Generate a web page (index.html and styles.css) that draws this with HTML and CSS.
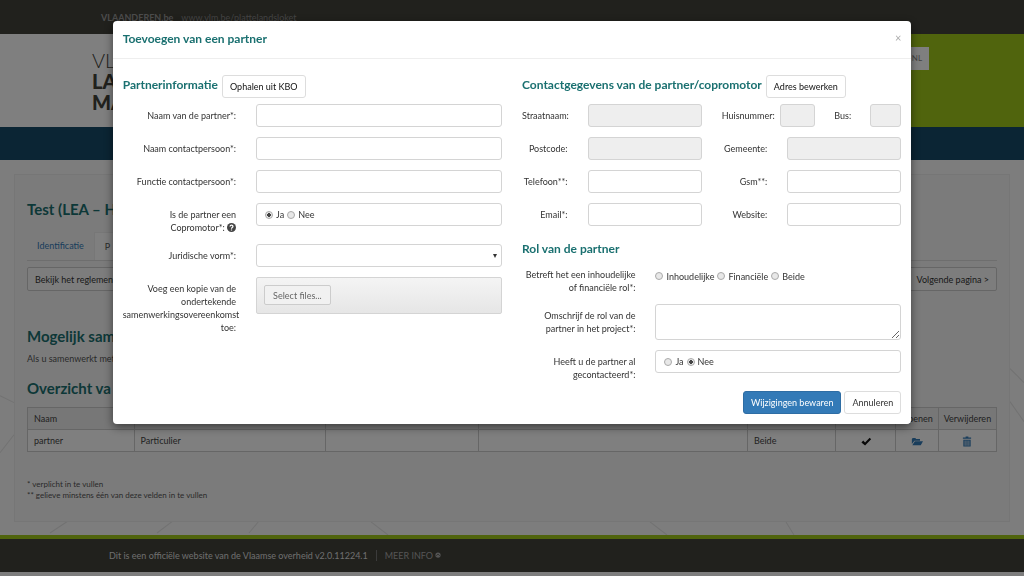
FILE: index.html
```html
<!DOCTYPE html>
<html lang="nl">
<head>
<meta charset="utf-8">
<meta name="viewport" content="width=device-width, initial-scale=1">
<title>Toevoegen van een partner</title>
<link rel="stylesheet" href="styles.css">
</head>
<body>
<div class="page">
  <div class="topbar"><b>VLAANDEREN.be</b><a href="#">www.vlm.be/plattelandsloket</a></div>
  <header class="header">
    <div class="logo"><span>VL</span><b>LA</b><b>MA</b></div>
    <div class="banner"><span class="lang">NL</span></div>
  </header>
  <nav class="navbar"></nav>
  <main class="main">
    <svg class="pattern" viewBox="0 0 1024 374" preserveAspectRatio="none" aria-hidden="true">
      <path d="M0 235l14 7M0 292l14-18M50 372l18-12M157 372l16-12M249 372l10-12M371 361l17 13M650 361l17 13M786 361l8 13M1010 208l14 14M1010 241l14 20"/>
    </svg>
    <section class="panel">
      <h1>Test (LEA – H</h1>
      <div class="tabs"><a href="#">Identificatie</a><a href="#" class="current">P</a></div>
      <div class="toolbar"><button type="button">Bekijk het reglement</button><button type="button">Volgende pagina &gt;</button></div>
      <h2>Mogelijk sam</h2>
      <p>Als u samenwerkt met</p>
      <h2>Overzicht va</h2>
      <table class="overview">
        <colgroup><col class="name"><col class="kind"><col class="third"><col class="fourth"><col class="role"><col class="check"><col class="open"><col class="remove"></colgroup>
        <thead><tr><th>Naam</th><th></th><th></th><th></th><th></th><th></th><th>Openen</th><th>Verwijderen</th></tr></thead>
        <tbody><tr>
          <td>partner</td><td>Particulier</td><td></td><td></td><td>Beide</td>
          <td class="mark"><svg class="icon black" viewBox="0 0 12 12" aria-label="Ja"><path d="M1 7l2-2 2 2 5-5 1.600 1.600L5 10.400z"/></svg></td>
          <td class="mark"><a href="#" aria-label="Openen"><svg class="icon" viewBox="0 0 14 12"><path d="M1 9V3l1-1h3l1 1h4.500v2H4zM1.500 10.500L4.500 5.600H14l-2.600 4.900z"/></svg></a></td>
          <td class="mark"><a href="#" aria-label="Verwijderen"><svg class="icon" viewBox="0 0 12 12"><path fill-rule="evenodd" d="M1.500 1.500h3V.5h3v1h3V3h-9zM2 4h8v7.500H2zM3.500 5v5.500h.8V5zM5.600 5v5.500h.8V5zM7.700 5v5.500h.8V5z"/></svg></a></td>
        </tr></tbody>
      </table>
      <div class="notes"><span>* verplicht in te vullen</span><span>** gelieve minstens één van deze velden in te vullen</span></div>
    </section>
  </main>
  <footer class="footer">
    <span>Dit is een officiële website van de Vlaamse overheid v2.0.11224.1</span>
    <a href="#">MEER INFO <svg class="up" viewBox="0 0 8 8" aria-hidden="true"><circle cx="4" cy="4" r="3.500"/><path d="M1.800 5L4 2.800 6.200 5"/></svg></a>
  </footer>
</div>

<div class="backdrop">
  <form class="modal" role="dialog" aria-labelledby="dialog-title">
    <div class="modal-header"><h3 id="dialog-title">Toevoegen van een partner</h3><button type="button" class="close" aria-label="Sluiten">×</button></div>
    <div class="modal-body">
      <section class="column">
        <div class="section-head"><h3>Partnerinformatie</h3><button type="button" class="btn strong">Ophalen uit KBO</button></div>
        <div class="fields">
          <label for="naam">Naam van de partner*:</label><input class="control" id="naam" type="text">
          <label for="contact">Naam contactpersoon*:</label><input class="control" id="contact" type="text">
          <label for="functie">Functie contactpersoon*:</label><input class="control" id="functie" type="text">
          <span class="label" id="coprom">Is de partner een Copromotor*: <svg class="help" viewBox="0 0 10 10" aria-hidden="true"><circle cx="5" cy="5" r="5"/><path d="M3.400 4c0-2.200 3.300-2 3.200-.1C6.600 5 5 5 5 6.300M5 7.200v1.200"/></svg></span>
          <div class="control radios" role="radiogroup" aria-labelledby="coprom"><label><input type="radio" name="coprom" checked>Ja</label><label><input type="radio" name="coprom">Nee</label></div>
          <label for="vorm">Juridische vorm*:</label>
          <div class="select"><select class="control" id="vorm"><option></option></select><svg viewBox="0 0 6 6" aria-hidden="true"><path d="M1 1h4L3 5z"/></svg></div>
          <span class="label">Voeg een kopie van de ondertekende samenwerkingsovereenkomst toe:</span>
          <div class="upload"><button type="button">Select files...</button></div>
        </div>
      </section>
      <section class="column">
        <div class="section-head"><h3>Contactgegevens van de partner/copromotor</h3><button type="button" class="btn strong">Adres bewerken</button></div>
        <div class="fields quad">
          <label for="straat">Straatnaam:</label><input class="control" id="straat" type="text" disabled>
          <div class="house"><label for="nummer">Huisnummer:</label><input class="control number" id="nummer" type="text" disabled><label for="bus">Bus:</label><input class="control bus" id="bus" type="text" disabled></div>
          <label for="postcode">Postcode:</label><input class="control" id="postcode" type="text" disabled>
          <label for="gemeente">Gemeente:</label><input class="control" id="gemeente" type="text" disabled>
          <label for="telefoon">Telefoon**:</label><input class="control" id="telefoon" type="text">
          <label for="gsm">Gsm**:</label><input class="control" id="gsm" type="text">
          <label for="email">Email*:</label><input class="control" id="email" type="text">
          <label for="website">Website:</label><input class="control" id="website" type="text">
        </div>
        <h3 class="role-title">Rol van de partner</h3>
        <div class="fields">
          <span class="label" id="rol">Betreft het een inhoudelijke of financiële rol*:</span>
          <div class="radios open-radios" role="radiogroup" aria-labelledby="rol"><label><input type="radio" name="rol">Inhoudelijke</label><label><input type="radio" name="rol">Financiële</label><label><input type="radio" name="rol">Beide</label></div>
          <label for="omschrijving">Omschrijf de rol van de partner in het project*:</label><textarea class="control area" id="omschrijving"></textarea>
          <span class="label" id="gecontacteerd">Heeft u de partner al gecontacteerd*:</span>
          <div class="control radios" role="radiogroup" aria-labelledby="gecontacteerd"><label><input type="radio" name="gecontacteerd">Ja</label><label><input type="radio" name="gecontacteerd" checked>Nee</label></div>
        </div>
        <div class="actions"><button type="submit" class="btn primary">Wijzigingen bewaren</button><button type="button" class="btn">Annuleren</button></div>
      </section>
    </div>
  </form>
</div>
</body>
</html>
```

FILE: styles.css
```css
* { box-sizing: border-box; }
body { margin: 0; background: #fafafa; color: #333; font: 9px/13px Lato, "Liberation Sans", sans-serif; }
h1, h2, h3, p { margin: 0; }
h1, h2, h3 { color: #1a7070; font-weight: 700; }
a { color: #337ab7; text-decoration: none; }
button, input, select, textarea { font: inherit; color: inherit; }

.topbar { display: flex; gap: 8px; height: 34px; padding: 0 101px; align-items: center; background: #42423a; color: #999; }
.topbar a { color: #888; }
.header { display: flex; justify-content: space-between; height: 93px; background: #fff; }
.logo { display: flex; flex-direction: column; padding: 16px 0 0 92px; font-size: 20px; line-height: 21px; color: #42423a; }
.logo span { font-weight: 300; }
.logo b { font-weight: 900; }
.banner { display: flex; justify-content: flex-end; width: 40%; padding: 13px 95px 0 0; background: #a0c81a; }
.lang { width: 40px; height: 23px; padding: 5px 7px; background: #fff; color: #888; font-size: 8px; text-align: right; }
.navbar { height: 33px; background: #164a68; }
.main { position: relative; padding: 14px 14px 13px; }
.pattern { position: absolute; inset: 0; width: 100%; height: 100%; fill: none; stroke: #e4e4e4; stroke-width: 1; }
.panel { position: relative; padding: 23px 12px 20px; border: 1px solid #ececec; background: #f7f7f7; }
h1, h2 { font-size: 15px; line-height: 22px; }
.tabs { display: flex; margin-top: 12px; border-bottom: 1px solid #ddd; }
.tabs a { padding: 7px 10px; }
.tabs .current { padding-right: 40px; background: #fff; border: 1px solid #eee; border-bottom: 0; color: #555; }
.toolbar { display: flex; justify-content: space-between; margin: 6px 0 34px; }
.toolbar button { height: 24px; padding: 0 7px; border: 1px solid #ccc; border-radius: 2px; background: #fbfbfb; }
.panel p { margin: 5px 0 12px; color: #555; }
.overview { width: 100%; margin-top: 8px; border-collapse: collapse; table-layout: fixed; background: #fff; color: #444; }
.overview th, .overview td { height: 22px; padding: 0 6px; border: 1px solid #ccc; text-align: left; font-weight: inherit; }
.overview th { background: #eee; padding-right: 2px; }
.overview th:nth-child(7), .overview th:nth-child(8) { padding: 0; text-align: center; }
.overview .mark { text-align: center; }
.name { width: 11%; } .kind { width: 19.8%; } .third { width: 15.7%; } .fourth { width: 27.8%; }
.role { width: 9.1%; } .check { width: 6.2%; } .open { width: 4.4%; } .remove { width: 6%; }
.icon { display: inline-block; width: 12px; height: 11px; vertical-align: middle; fill: currentColor; }
.black { fill: #111; }
.notes { display: flex; flex-direction: column; margin-top: 27px; color: #555; font-size: 8px; line-height: 11px; }
.footer { display: flex; height: 37px; align-items: center; gap: 8px; padding: 0 109px; border-top: 4px solid #a0c81a; background: #42423a; color: #ddd; }
.footer a { padding-left: 8px; border-left: 1px solid #777; color: #aaa; }
.footer a { line-height: 11px; }
.up { width: 6px; height: 6px; fill: #aaa; vertical-align: 1px; }
.up path { fill: none; stroke: #42423a; stroke-width: 1; }

.backdrop { position: fixed; inset: 0; overflow: auto; padding: 21px 0; background: rgba(0, 0, 0, .5); }
.modal { width: 78%; margin: 0 auto; border-radius: 4px; background: #fff; box-shadow: 0 3px 10px rgba(0, 0, 0, .5); }
.modal-header { display: flex; justify-content: space-between; height: 38px; padding: 10px; border-bottom: 1px solid #eee; }
h3 { font-size: 12px; line-height: 16px; }
.close { height: 13px; padding: 0; border: 0; background: none; color: #aaa; font-size: 11px; line-height: 13px; }
.modal-body { display: grid; grid-template-columns: repeat(2, minmax(0, 1fr)); gap: 20px; padding: 16px 10px 10px; }
.section-head { display: flex; align-items: flex-start; gap: 4px; margin-bottom: 6px; white-space: nowrap; }
.section-head h3 { padding-top: 2px; }
.btn { height: 23px; padding: 0 7px; border: 1px solid #ddd; border-radius: 3px; background: #fff; white-space: nowrap; }
.strong { color: #111; }
.primary { border-color: #2e6da4; background: #337ab7; color: #fff; }
.fields { display: grid; grid-template-columns: minmax(0, 6fr) minmax(0, 13fr); column-gap: 20px; row-gap: 10px; align-items: start; }
.fields > label, .label, .house label { padding-top: 5px; text-align: right; }
.quad { grid-template-columns: minmax(0, 2fr) minmax(0, 5fr) minmax(0, 2fr) minmax(0, 5fr); }
.control { display: block; width: 100%; height: 23px; padding: 0 8px; border: 1px solid #d4d4d4; border-radius: 3px; background: #fff; }
.control:disabled { background: #eee; }
.house { grid-column: span 2; display: flex; gap: 19px; }
.house .number { flex: 4; min-width: 0; margin-left: -14px; }
.house .bus { flex: 3; min-width: 0; }
.radios { display: flex; align-items: center; gap: 3px; min-height: 23px; }
.open-radios { min-height: 26px; }
.radios label { display: flex; align-items: center; gap: 3px; }
.radios input { appearance: none; width: 8px; height: 8px; margin: 0; border: 1px solid #aaa; border-radius: 50%; background: #e8e8e8; }
.radios input:checked { background: radial-gradient(circle, #444 0 2px, #e8e8e8 2px); }
.help { width: 9px; height: 9px; vertical-align: -1px; fill: #444; }
.help path { fill: none; stroke: #fff; stroke-width: 1.400; }
.select { display: grid; align-items: center; }
.select > * { grid-area: 1 / 1; }
.select select { appearance: none; }
.select svg { justify-self: end; width: 6px; height: 6px; margin-right: 4px; fill: #333; pointer-events: none; }
.upload { height: 37px; padding: 7px; border: 1px solid #d4d4d4; border-radius: 2px; background: linear-gradient(#f4f4f4, #e6e6e6); }
.upload button { height: 20px; padding: 0 8px; border: 1px solid #ccc; border-radius: 2px; background: #f1f1f1; color: #666; }
.area { height: 36px; resize: vertical; }
.role-title { margin: 15px 0 6px; }
.actions { display: flex; justify-content: flex-end; gap: 3px; margin-top: 10px; }
```
